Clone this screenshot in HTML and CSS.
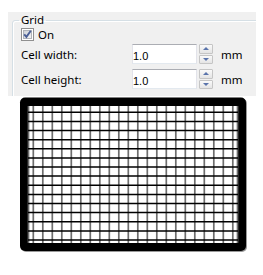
FILE: index.html
```html
<!DOCTYPE html>
<html lang="en">
<head>
  <meta charset="UTF-8" />
  <title>Grid settings</title>
  <link rel="stylesheet" href="styles.css">
</head>
<body>
  <div class="panel">
    <fieldset class="group">
      <legend>Grid</legend>

      <label class="check">
        <span class="box">
          <svg width="13" height="13" viewBox="0 0 13 13">
            <defs>
              <linearGradient id="boxFill" x1="0" y1="0" x2="1" y2="1">
                <stop offset="0" stop-color="#cbcfd5" />
                <stop offset="1" stop-color="#f6f6f6" />
              </linearGradient>
            </defs>
            <rect x="0.5" y="0.5" width="12" height="12" fill="#fff" stroke="#8f8f8f" />
            <rect x="2.5" y="2.5" width="8" height="8" fill="url(#boxFill)" stroke="#b0b4ba" />
            <path d="M3.2 6.4 L5.4 8.9 L9.8 2.8" fill="none" stroke="#4a5f97" stroke-width="1.9" />
          </svg>
        </span>
        On
      </label>

      <div class="field">
        <label class="field-label">Cell width:</label>
        <input class="num" type="text" value="1.0" />
        <span class="spin">
          <span class="spin-btn up"></span>
          <span class="spin-btn down"></span>
        </span>
        <span class="unit">mm</span>
      </div>

      <div class="field">
        <label class="field-label">Cell height:</label>
        <input class="num" type="text" value="1.0" />
        <span class="spin">
          <span class="spin-btn up"></span>
          <span class="spin-btn down"></span>
        </span>
        <span class="unit">mm</span>
      </div>
    </fieldset>
  </div>

  <!-- preview of the grid on the card -->
  <svg class="preview" width="263" height="179" viewBox="0 96 263 179">
    <rect x="21" y="98.5" width="226" height="153.5" rx="5" fill="#9a9a9a" />
    <rect x="20" y="97.5" width="226" height="153.5" rx="5" fill="#000" />
    <rect x="28" y="106" width="210" height="137" fill="#fff" />
    <path class="v-lines" d="M28.5 106V243 M237.5 106V243
      M33.3 106V243 M42.8 106V243 M52.3 106V243 M61.8 106V243 M71.3 106V243 M80.8 106V243
      M90.3 106V243 M99.8 106V243 M109.3 106V243 M118.8 106V243 M128.3 106V243 M137.8 106V243
      M147.3 106V243 M156.8 106V243 M166.3 106V243 M175.8 106V243 M185.3 106V243 M194.8 106V243
      M204.3 106V243 M213.8 106V243 M223.3 106V243 M232.8 106V243" />
    <path class="h-lines" d="M28 112.3H238 M28 121.4H238 M28 130.5H238 M28 139.7H238 M28 148.8H238
      M28 157.9H238 M28 167H238 M28 176.1H238 M28 185.3H238 M28 194.4H238 M28 203.5H238
      M28 212.6H238 M28 221.7H238 M28 230.9H238 M28 240H238" />
  </svg>
</body>
</html>
```

FILE: styles.css
```css
body {
  margin: 0;
  background: #fff;
  font-family: 'Segoe UI', 'Noto Sans', sans-serif;
  font-size: 11.5px;
  color: #000;
}

.panel {
  margin: 12px 7px 0 8px;
  height: 84px;
  background: #f0f0f0;
  overflow: hidden;
}

.group {
  margin: 2px -10px 0 4px;
  padding: 2px 8px 20px 8px;
  border: 1px solid #d5dfe5;
  border-top-left-radius: 3px;
  box-shadow: inset 1px 1px 0 #fff;
  min-width: 0;
}

.group legend {
  padding: 0 2px;
  margin-left: -2px;
  line-height: 12px;
  font-size: 11.5px;
}

.check {
  display: flex;
  align-items: center;
  gap: 4px;
  height: 13px;
  line-height: 13px;
}

.box {
  display: block;
  width: 13px;
  height: 13px;
}

.box svg {
  display: block;
}

.field {
  display: flex;
  align-items: center;
  height: 20px;
  margin-top: 3px;
}

.field + .field {
  margin-top: 5px;
}

.field-label {
  width: 111px;
  padding-top: 2px;
  line-height: 16px;
}

.num {
  box-sizing: border-box;
  width: 65px;
  height: 20px;
  margin: 0;
  padding: 3px 0 0 0;
  border: 1px solid #e2e3ea;
  border-top-color: #abadb3;
  border-bottom-color: #e3e9ef;
  background: #fff;
  font-family: 'Liberation Sans', Arial, sans-serif;
  font-size: 11px;
  color: #000;
  outline: none;
}

.spin {
  display: flex;
  flex-direction: column;
  gap: 1px;
  width: 14px;
  height: 20px;
  margin-left: 2px;
}

.spin-btn {
  flex: 1;
  display: flex;
  align-items: center;
  justify-content: center;
  border: 1px solid #c5c5c5;
  border-radius: 1px;
  background: linear-gradient(#fafafa, #e4e4e4);
}

.spin-btn::after {
  content: '';
  width: 0;
  height: 0;
  border-left: 3px solid transparent;
  border-right: 3px solid transparent;
}

.spin-btn.up::after {
  border-bottom: 3px solid #5a74ab;
}

.spin-btn.down::after {
  border-top: 3px solid #5a74ab;
}

.unit {
  margin-left: 8px;
  padding-top: 2px;
  line-height: 16px;
}

.preview {
  display: block;
}

.v-lines {
  fill: none;
  stroke: #6e6e6e;
  stroke-width: 1.7;
}

.h-lines {
  fill: none;
  stroke: #000;
  stroke-width: 1.5;
}
```
